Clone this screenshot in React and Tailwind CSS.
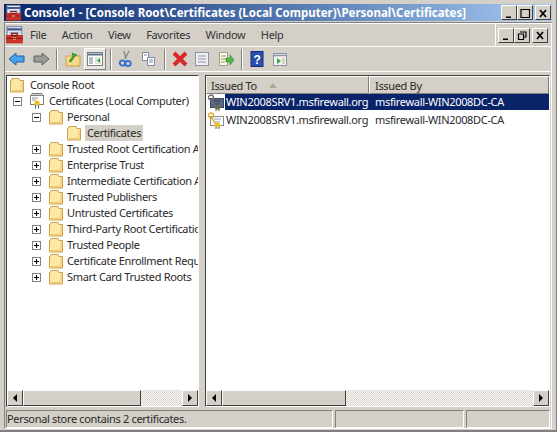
const font = { fontFamily: '"Noto Sans", "DejaVu Sans", sans-serif' };

function Folder() {
  return (
    <svg width="16" height="16" viewBox="0 0 16 16" className="shrink-0">
      <path d="M1.5 3.5V15H14.5V3.5H11L10 1.5H3L2.5 3.5Z" fill="#fde7a6" stroke="#c9a24a" />
      <path d="M3 13.5H13V5" fill="none" stroke="#f0c566" />
    </svg>
  );
}

function Box({ plus }) {
  return (
    <svg width="9" height="9" viewBox="0 0 9 9" className="shrink-0">
      <rect x="0.5" y="0.5" width="8" height="8" fill="#fff" stroke="#808080" />
      <path d={plus ? "M2 4.5H7M4.5 2V7" : "M2 4.5H7"} stroke="#000" />
    </svg>
  );
}

function TreeRow({ pad, gap, box, label, sel, icon, noCol }) {
  return (
    <div className={"flex h-4 items-center whitespace-nowrap " + pad}>
      {!noCol && (
        <span className="flex w-4 shrink-0 items-center">{box !== undefined && <Box plus={box} />}</span>
      )}
      {icon || <Folder />}
      <span className={"px-[2px] leading-4 " + gap + " " + (sel ? "bg-[#d4d0c8]" : "")}>{label}</span>
    </div>
  );
}

function Toolbox({ size = 16 }) {
  return (
    <svg width={size} height={size} viewBox="0 0 16 16" className="shrink-0">
      <rect x="1" y="0.5" width="13" height="9" fill="#dfe6f2" stroke="#7f8fa8" />
      <path d="M1 3H14" stroke="#44588a" strokeWidth="2" />
      <path d="M3 6H12M3 8H12" stroke="#9aa5b8" />
      <rect x="0" y="8" width="15" height="7.5" fill="#c8342a" />
      <rect x="5" y="6.5" width="5" height="2" fill="none" stroke="#7c1710" />
      <rect x="6" y="10" width="3" height="2" fill="#f4c9a0" />
      <path d="M0 11H15" stroke="#8e1e16" />
    </svg>
  );
}

function Cert({ dark }) {
  return (
    <svg width="17" height="17" viewBox="0 0 17 17" className="shrink-0">
      {dark ? (
        <>
          <rect x="3.5" y="4.5" width="13" height="9" fill="#5a6a88" stroke="#3b4760" />
          <path d="M6 7H14M6 10H12" stroke="#333f5a" />
          <circle cx="4" cy="3.5" r="2.5" fill="none" stroke="#6f6f6f" strokeWidth="1.4" />
          <path d="M5 6L9 13" stroke="#6f6f6f" strokeWidth="1.5" />
          <circle cx="10.5" cy="13" r="2.6" fill="#6b6b55" />
          <path d="M9 15V17M12 15V17" stroke="#555" />
        </>
      ) : (
        <>
          <rect x="3.5" y="4.5" width="13" height="9" fill="#fff" stroke="#8c8c8c" />
          <path d="M7 7H14M7 10H13" stroke="#8aa0c4" />
          <circle cx="4" cy="3.5" r="2.5" fill="none" stroke="#dcae2a" strokeWidth="1.4" />
          <path d="M5 6L9 13" stroke="#dcae2a" strokeWidth="1.5" />
          <circle cx="10.5" cy="13" r="2.6" fill="#eec21c" />
          <path d="M9 15V17M12 15V17" stroke="#3e5ea8" />
        </>
      )}
    </svg>
  );
}

function LocalCert() {
  return (
    <svg width="17" height="16" viewBox="0 0 17 16" className="shrink-0">
      <rect x="1.5" y="2.5" width="13" height="9" fill="#fff" stroke="#808080" />
      <rect x="3" y="0.5" width="10" height="2" fill="#d4d0c8" stroke="#808080" />
      <path d="M3 5H9M3 7H7" stroke="#909090" />
      <circle cx="8" cy="10" r="2.6" fill="#eec21c" />
      <path d="M6.5 12V15.5M9.5 12V15.5" stroke="#3e5ea8" />
    </svg>
  );
}

function Sep({ cls }) {
  return <div className={"h-[21px] w-[2px] shrink-0 border-r border-l border-r-white border-l-[#808080] " + cls} />;
}

function Tool({ children, cls, active }) {
  return (
    <div
      className={
        "flex h-[22px] shrink-0 items-center justify-center " +
        cls +
        (active ? " border border-t-white border-r-[#808080] border-b-[#808080] border-l-white bg-[#e8e6e1]" : "")
      }
    >
      {children}
    </div>
  );
}

const I = ({ children }) => (
  <svg width="18" height="18" viewBox="0 0 18 18">
    {children}
  </svg>
);

function Toolbar() {
  return (
    <div className="flex h-[24px] items-center pl-px">
      <Tool cls="w-[22px]">
        <I>
          <path d="M1 9L8 3V6H16V12H8V15Z" fill="#4aa3e8" stroke="#1f5fa8" />
        </I>
      </Tool>
      <Tool cls="ml-px w-[24px]">
        <I>
          <path d="M17 9L10 3V6H2V12H10V15Z" fill="#9a9a9a" stroke="#5e5e5e" />
        </I>
      </Tool>
      <Sep cls="mx-[3px]" />
      <Tool cls="w-[23px]">
        <I>
          <path d="M2 6H16V16H2Z" fill="#f6d98a" stroke="#c9a24a" />
          <path d="M5 11L9 6L8 3L13 5L11 6L7 12Z" fill="#3ea83e" stroke="#1f7a1f" strokeWidth="0.6" />
        </I>
      </Tool>
      <Tool cls="w-[22px]" active>
        <I>
          <rect x="1.5" y="2.5" width="15" height="13" fill="#fff" stroke="#808080" />
          <path d="M2 4.5H16" stroke="#5f6f8f" strokeWidth="2" />
          <rect x="3" y="7" width="4" height="7" fill="#b7bfcc" />
          <path d="M9 7H15V14H9Z" fill="#dce6d8" />
          <path d="M14 8.5L11 10.5L14 12.5Z" fill="#2f8f3f" />
        </I>
      </Tool>
      <Sep cls="mr-[3px] ml-[4px]" />
      <Tool cls="w-[22px]">
        <I>
          <path d="M12 1L8 9M7 1L9 9" stroke="#8a8a8a" strokeWidth="1.4" />
          <circle cx="5.5" cy="13" r="2.7" fill="none" stroke="#2f6fd0" strokeWidth="1.8" />
          <circle cx="11" cy="13.5" r="2.7" fill="none" stroke="#2f6fd0" strokeWidth="1.8" />
        </I>
      </Tool>
      <Tool cls="w-[22px]">
        <I>
          <path d="M3.5 2.5H9.5V10.5H3.5Z" fill="#fff" stroke="#7a8aa8" />
          <path d="M8.5 7.5H15.5V15.5H8.5Z" fill="#fff" stroke="#7a8aa8" />
          <path d="M5 5H8M10 10H14M10 12H14" stroke="#7a8aa8" />
        </I>
      </Tool>
      <Sep cls="mr-[3px] ml-[5px]" />
      <Tool cls="w-[21px]">
        <I>
          <path d="M3 3L15 15M15 3L3 15" stroke="#d8282a" strokeWidth="4" />
        </I>
      </Tool>
      <Tool cls="w-[23px]">
        <I>
          <rect x="2.5" y="2.5" width="13" height="13" fill="#eef0f4" stroke="#8c93a3" />
          <path d="M5 6H13M5 9H13M5 12H13" stroke="#8c93a3" />
        </I>
      </Tool>
      <Tool cls="w-[25px]">
        <I>
          <path d="M2.5 2.5H10.5V15.5H2.5Z" fill="#fffbe8" stroke="#a0a08c" />
          <path d="M4 6H9M4 9H9M4 12H8" stroke="#7aa05a" />
          <path d="M9 8H13V5L17 10L13 15V12H9Z" fill="#54b848" stroke="#2f8030" strokeWidth="0.6" />
        </I>
      </Tool>
      <Sep cls="mx-[3px]" />
      <Tool cls="w-[21px]">
        <I>
          <rect x="3" y="1.5" width="12" height="15" fill="#2a4fb0" stroke="#16296e" />
          <text x="9" y="14" textAnchor="middle" fontSize="12" fontWeight="700" fill="#fff" fontFamily="Liberation Sans">?</text>
        </I>
      </Tool>
      <Tool cls="w-[25px]">
        <I>
          <rect x="2.5" y="3.5" width="13" height="12" fill="#f0f2ee" stroke="#8c93a3" />
          <path d="M3 5.5H15" stroke="#8c93a3" strokeWidth="1.5" />
          <path d="M6 8V14L10 11Z" fill="#3ea83e" />
          <path d="M11 8H14V14H11Z" fill="#cfd6c8" />
        </I>
      </Tool>
    </div>
  );
}

function WinBtn({ kind }) {
  const d = {
    min: "M3 9.5H8V11H3Z",
    close: "M3 3L9 10M9 3L3 10",
    max: "M2 2.5H10.5V10.5H2Z",
    restore: "M4 3H10V8H8M2.5 5H7.5V10.5H2.5Z",
  }[kind];
  return (
    <div className="flex h-[15px] w-4 items-center justify-center border border-t-white border-r-[#404040] border-b-[#404040] border-l-white bg-[#d4d0c8]">
      <svg width="12" height="12" viewBox="0 0 12 12">
        {kind === "min" ? (
          <path d={d} fill="#000" />
        ) : (
          <path d={d} fill="none" stroke="#000" strokeWidth={kind === "close" ? 1.7 : 1.2} />
        )}
      </svg>
    </div>
  );
}

function ArrowBtn({ dir }) {
  return (
    <div className="flex h-4 w-4 shrink-0 items-center justify-center border border-t-white border-r-[#404040] border-b-[#404040] border-l-white bg-[#d4d0c8]">
      <svg width="6" height="8" viewBox="0 0 6 8">
        <path d={dir === "l" ? "M5 0V8L1 4Z" : "M1 0V8L5 4Z"} fill="#000" />
      </svg>
    </div>
  );
}

function HBar({ thumb }) {
  return (
    <div className="flex h-4 shrink-0 items-stretch">
      <ArrowBtn dir="l" />
      <div className={"shrink-0 border border-t-white border-r-[#404040] border-b-[#404040] border-l-white bg-[#d4d0c8] " + thumb} />
      <div className="flex-1 bg-[repeating-conic-gradient(#d4d0c8_0_25%,#ffffff_0_50%)] bg-[length:2px_2px]" />
      <ArrowBtn dir="r" />
    </div>
  );
}

const sunken = "border border-t-[#808080] border-r-white border-b-white border-l-[#808080]";
const pane = "border border-t-[#404040] border-r-white border-b-white border-l-[#404040]";

function Row({ dark, selected }) {
  return (
    <div className="flex h-[18px] items-start whitespace-nowrap">
      <span className="flex w-[19px] shrink-0 justify-center">
        <Cert dark={dark} />
      </span>
      <div className={"flex h-[16px] flex-1 items-center leading-4 " + (selected ? "bg-[#0a246a] text-white" : "")}>
        <span className="w-[150px] shrink-0 pl-px tracking-[-0.3px]">WIN2008SRV1.msfirewall.org</span>
        <span>msfirewall-WIN2008DC-CA</span>
      </div>
    </div>
  );
}

export default function App() {
  const items = [
    "Trusted Root Certification Authorities",
    "Enterprise Trust",
    "Intermediate Certification Authorities",
    "Trusted Publishers",
    "Untrusted Certificates",
    "Third-Party Root Certification Authorities",
    "Trusted People",
    "Certificate Enrollment Requests",
    "Smart Card Trusted Roots",
  ];
  return (
    <div
      className="flex h-[432px] w-[557px] flex-col overflow-hidden border-r border-b-2 border-[#808080] bg-[#d4d0c8] px-[4px] pt-[4px] text-[11px] tracking-[-0.33px] text-[#2a2a2a]"
      style={font}
    >
      <div className="flex h-[17px] shrink-0 items-center bg-gradient-to-r from-[#0a246a] to-[#a6caf0] pr-[1px] pl-[2px]">
        <Toolbox />
        <span className="ml-[2px] flex-1 text-[11.5px] font-bold tracking-normal whitespace-nowrap text-white">
          Console1 - [Console Root\Certificates (Local Computer)\Personal\Certificates]
        </span>
        <div className="flex">
          <WinBtn kind="min" />
          <WinBtn kind="max" />
          <div className="w-[2px]" />
          <WinBtn kind="close" />
        </div>
      </div>

      <div className={"mt-[1px] flex h-[407px] shrink-0 flex-col " + sunken}>
        <div className="flex h-[24px] shrink-0 items-center border-t border-b border-white">
          <div className="flex h-full flex-1 items-center border-r border-white pl-px">
            <Toolbox size={18} />
            <div className="ml-[6px] flex gap-[15.5px] text-[#333]">
              <span>File</span>
              <span>Action</span>
              <span>View</span>
              <span>Favorites</span>
              <span>Window</span>
              <span>Help</span>
            </div>
          </div>
          <div className="flex w-[55px] items-center justify-start pl-[2px]">
            <WinBtn kind="min" />
            <WinBtn kind="restore" />
            <div className="w-[2px]" />
            <WinBtn kind="close" />
          </div>
        </div>

        <div className="h-[25px] shrink-0 border-b border-white">
          <Toolbar />
        </div>

        <div className="mt-[3px] flex h-[332px] shrink-0 gap-[6px] px-[1px]">
          <div className={"flex w-[193px] shrink-0 flex-col overflow-hidden bg-white " + pane}>
            <div className="min-h-0 flex-1 overflow-hidden pt-[1px]">
              <TreeRow pad="pl-[2px]" gap="ml-[3px]" noCol label="Console Root" />
              <TreeRow pad="pl-[6px]" gap="ml-[1px]" box={false} label="Certificates (Local Computer)" icon={<LocalCert />} />
              <TreeRow pad="pl-[25px]" gap="ml-[1px]" box={false} label="Personal" />
              <TreeRow pad="pl-[43px]" gap="ml-[3px]" label="Certificates" sel />
              {items.map((t) => (
                <TreeRow key={t} pad="pl-[25px]" gap="ml-[1px]" box={true} label={t} />
              ))}
            </div>
            <HBar thumb="w-[118px]" />
          </div>
          <div className={"flex min-w-0 flex-1 flex-col bg-white " + pane}>
            <div className="flex h-[18px] shrink-0 items-stretch leading-[16px]">
              <div className="flex w-[163px] shrink-0 items-center border border-t-white border-r-[#808080] border-b-[#808080] border-l-white bg-[#d4d0c8] pt-[1px] pl-[4px]">
                Issued To
                <svg width="8" height="5" viewBox="0 0 8 5" className="ml-[12px]">
                  <path d="M4 0L8 5H0Z" fill="#aca899" />
                </svg>
              </div>
              <div className="flex flex-1 items-center border border-t-white border-r-[#808080] border-b-[#808080] border-l-white bg-[#d4d0c8] pt-[1px] pl-[5px]">
                Issued By
              </div>
            </div>
            <div className="min-h-0 flex-1 overflow-hidden">
              <Row dark selected />
              <Row />
            </div>
            <HBar thumb="w-[124px]" />
          </div>
        </div>

        <div className="mt-[3px] flex h-[18px] shrink-0 gap-[2px] px-[1px]">
          <div className={"flex w-[328px] items-center " + sunken}>Personal store contains 2 certificates.</div>
          <div className={"w-[130px] " + sunken} />
          <div className={"w-[84px] " + sunken} />
        </div>
      </div>
    </div>
  );
}
